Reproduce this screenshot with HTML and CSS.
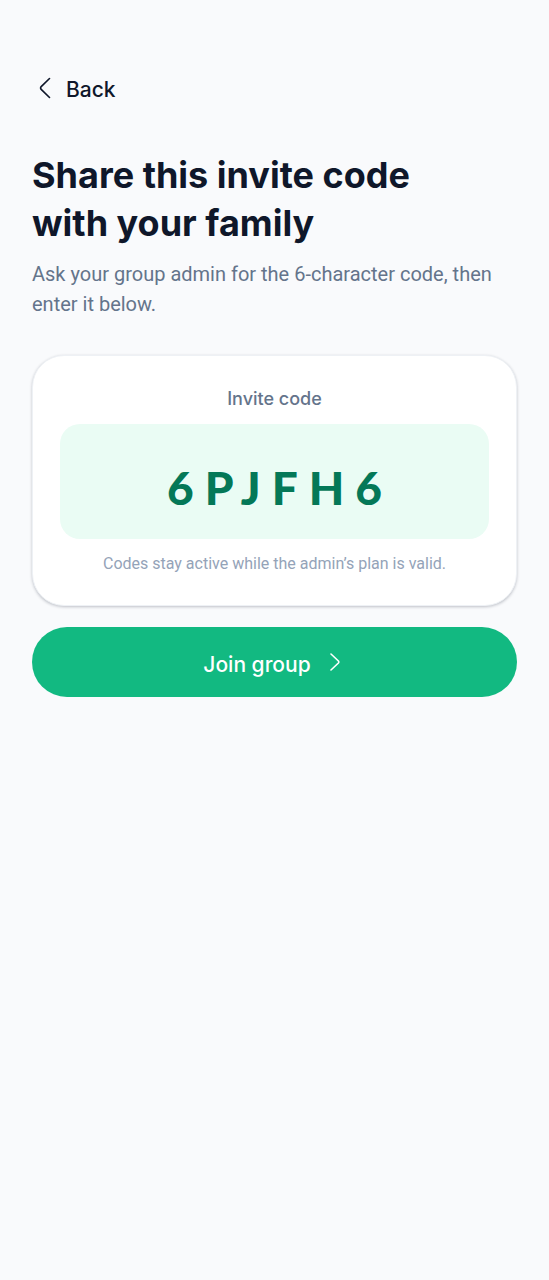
FILE: index.html
```html
<!DOCTYPE html>
<html lang="en">
<head>
    <meta charset="UTF-8">
    <meta name="viewport" content="width=device-width, initial-scale=1.0">
    <title>Invite code</title>
    <link rel="stylesheet" href="styles.css">
</head>
<body>
    <main class="page">
        <a href="#" class="back">
            <svg class="back-icon" viewBox="0 0 12 22" aria-hidden="true">
                <path d="M10.5 1.5 L2.2 9.6 Q1 11 2.2 12.4 L10.5 20.5"/>
            </svg>
            <span>Back</span>
        </a>

        <h1>Share this invite code<br>with your family</h1>
        <p class="intro">Ask your group admin for the 6-character code, then enter it below.</p>

        <form>
            <div class="card">
                <label for="code">Invite code</label>
                <input id="code" class="code" type="text" value="6PJFH6" maxlength="6" autocomplete="off">
                <p class="hint">Codes stay active while the admin’s plan is valid.</p>
            </div>

            <button type="submit" class="join">
                <span>Join group</span>
                <svg class="join-icon" viewBox="0 0 10 18" aria-hidden="true">
                    <path d="M1 1 L8.4 8 Q9.2 9 8.4 10 L1 17"/>
                </svg>
            </button>
        </form>
    </main>
</body>
</html>
```

FILE: styles.css
```css
* {
    box-sizing: border-box;
}
body {
    margin: 0;
    background-color: #f9fafc;
    color: #0f172a;
    font-family: Roboto, sans-serif;
}
.page {
    padding: 72px 32px 32px;
}
.back {
    display: inline-flex;
    align-items: center;
    gap: 15px;
    height: 35px;
    padding-left: 7px;
    color: #0f172a;
    font-family: Inter, sans-serif;
    font-size: 21px;
    font-weight: 500;
    text-decoration: none;
}
.back-icon {
    width: 12px;
    height: 22px;
    margin-bottom: 4px;
}
.back-icon path,
.join-icon path {
    fill: none;
    stroke: currentColor;
    stroke-width: 1.6;
    stroke-linecap: round;
}
h1 {
    margin: 44px 0 12px;
    font-family: Inter, sans-serif;
    font-size: 36px;
    font-weight: 700;
    line-height: 48px;
}
.intro {
    margin: 0 0 36px;
    color: #64748b;
    font-size: 20px;
    line-height: 30px;
}
.card {
    padding: 28px 27px;
    border: 1px solid #eef1f5;
    border-radius: 32px;
    background-color: #fff;
    box-shadow: 0 1px 3px rgba(15, 23, 42, 0.25);
    text-align: center;
}
.card label {
    display: block;
    margin-bottom: 10px;
    color: #64748b;
    font-family: Inter, sans-serif;
    font-size: 18px;
    font-weight: 500;
    line-height: 30px;
}
.code {
    display: block;
    width: 100%;
    height: 115px;
    padding: 12px 0 0;
    border: 0;
    border-radius: 20px;
    background-color: #eafcf4;
    color: #047857;
    font-family: Lato, sans-serif;
    font-size: 46px;
    font-weight: 900;
    letter-spacing: 11px;
    text-align: center;
    text-indent: 11px;
}
.hint {
    margin: 12px 0 0;
    color: #94a3b8;
    font-size: 16px;
    line-height: 26px;
}
.join {
    display: flex;
    align-items: center;
    justify-content: center;
    gap: 19px;
    width: 100%;
    height: 70px;
    margin-top: 21px;
    padding: 4px 6px 0 0;
    border: 0;
    border-radius: 35px;
    background-color: #12b981;
    color: #fff;
    font-family: Inter, sans-serif;
    font-size: 21px;
    font-weight: 500;
}
.join-icon {
    width: 10px;
    height: 18px;
    margin-bottom: 4px;
}
```
